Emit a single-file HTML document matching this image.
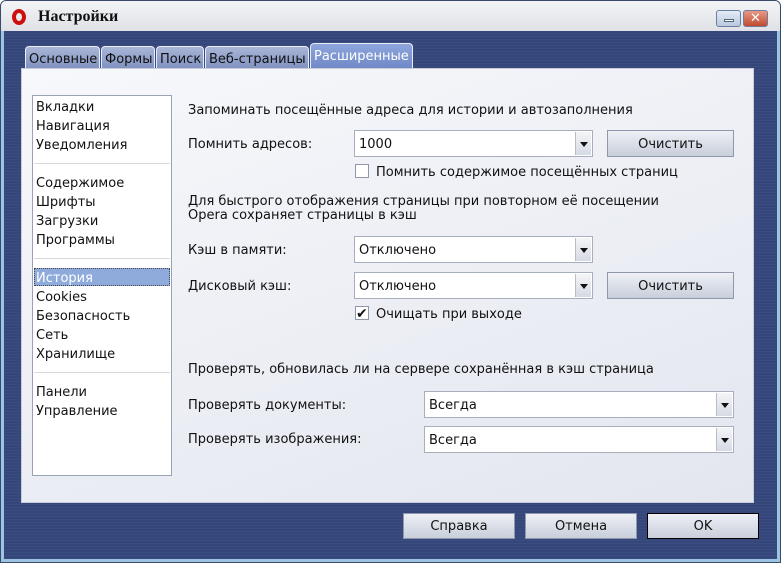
<!DOCTYPE html>
<html><head><meta charset="utf-8"><style>
*{margin:0;padding:0;box-sizing:border-box}
body{width:781px;height:563px;overflow:hidden;background:#fff;font-family:"DejaVu Sans","Liberation Sans",sans-serif;font-size:13px;color:#111;position:relative}
.abs{position:absolute}
#win{left:0;top:0;width:781px;height:563px;border:1px solid #3a4a6a;border-radius:6px 6px 0 0;background:#9cc3e0}
#title{left:1px;top:1px;width:779px;height:30px;background:linear-gradient(#f4f5f7,#dfe1e6);border-radius:5px 5px 0 0}
#body{left:4px;top:31px;width:773px;height:528px;background:repeating-linear-gradient(#34467a 0,#34467a 2px,#3a4c80 2px,#3a4c80 3px)}
.tab{top:46px;height:23px;background:linear-gradient(#a9b6d8,#7f90c0);border:1px solid #e8ecf6;border-bottom:none;border-radius:4px 4px 0 0;padding:5px 3px 0;font-size:13px;color:#111;white-space:nowrap}
#panel{left:21px;top:68px;width:733px;height:435px;background:linear-gradient(160deg,#f7f8fb,#e3e6ef);border:1px solid #c8cdd8}
#list{left:32px;top:95px;width:140px;height:381px;background:#fff;border:1px solid #9aa3b5}
.li{left:36px;font-size:13px}
.sep{left:34px;width:136px;height:1px;background:#d8d8d8}
.t{left:188px;font-size:13px;white-space:nowrap}
.combo{background:#fff;border:1px solid #a7aebc;height:27px}
.combo span{position:absolute;left:4px;top:6px}
.combo i{position:absolute;right:1px;top:1px;width:16px;height:23px;background:linear-gradient(#f4f5f8,#d6dae4);border-left:1px solid #b8bdc8}
.combo i:after{content:"";position:absolute;left:4px;top:10px;border:4px solid transparent;border-top:5px solid #111;border-bottom:0}
.btn{background:linear-gradient(#eef0f5,#c8cedb);border:1px solid #8f98ab;text-align:center;line-height:27px;font-size:13px}
.cb{width:14px;height:14px;background:#fff;border:1px solid #8f98ab}
.wb{top:10px;width:25px;height:17px;border:1px solid #6b7f9c;border-radius:3px}
</style></head><body>
<div id="win" class="abs"></div>
<div id="title" class="abs"></div>
<div class="abs" style="left:12px;top:9px;width:14px;height:16px;border:4.5px solid #cc1010;border-radius:50%"></div>
<div class="abs" style="left:38px;top:8px;font-family:'Liberation Serif',serif;font-weight:bold;font-size:16px">Настройки</div>
<div class="abs wb" style="left:716px;background:linear-gradient(#e4ecf6,#b8c8de)"><div class="abs" style="left:7px;top:8px;width:10px;height:3px;background:#fff;border:1px solid #567"></div></div>
<div class="abs wb" style="left:743px;background:linear-gradient(#e89a88,#c04a30);color:#fff;font-weight:bold;text-align:center;line-height:15px;font-size:13px">✕</div>
<div id="body" class="abs"></div>
<div class="abs tab" style="left:25px;width:75px">Основные</div>
<div class="abs tab" style="left:101px;width:54px">Формы</div>
<div class="abs tab" style="left:156px;width:48px">Поиск</div>
<div class="abs tab" style="left:205px;width:104px">Веб-страницы</div>
<div class="abs tab" style="left:310px;top:43px;height:26px;width:103px;background:linear-gradient(#8ea6dc,#6f88c6);color:#fff;padding-top:5px">Расширенные</div>
<div id="panel" class="abs"></div>
<div id="list" class="abs"></div>
<div class="abs li" style="top:100px">Вкладки</div>
<div class="abs li" style="top:119px">Навигация</div>
<div class="abs li" style="top:138px">Уведомления</div>
<div class="abs sep" style="top:163px"></div>
<div class="abs li" style="top:176px">Содержимое</div>
<div class="abs li" style="top:195px">Шрифты</div>
<div class="abs li" style="top:214px">Загрузки</div>
<div class="abs li" style="top:233px">Программы</div>
<div class="abs sep" style="top:258px"></div>
<div class="abs" style="left:34px;top:268px;width:136px;height:18px;background:#8eabdb;border:1px dotted #445"></div>
<div class="abs li" style="top:271px;color:#fff">История</div>
<div class="abs li" style="top:290px">Cookies</div>
<div class="abs li" style="top:309px">Безопасность</div>
<div class="abs li" style="top:328px">Сеть</div>
<div class="abs li" style="top:347px">Хранилище</div>
<div class="abs sep" style="top:372px"></div>
<div class="abs li" style="top:385px">Панели</div>
<div class="abs li" style="top:404px">Управление</div>

<div class="abs t" style="top:103px">Запоминать посещённые адреса для истории и автозаполнения</div>
<div class="abs t" style="top:137px">Помнить адресов:</div>
<div class="abs combo" style="left:354px;top:130px;width:239px"><span>1000</span><i></i></div>
<div class="abs btn" style="left:607px;top:130px;width:127px;height:27px">Очистить</div>
<div class="abs cb" style="left:355px;top:164px"></div>
<div class="abs t" style="left:376px;top:165px">Помнить содержимое посещённых страниц</div>
<div class="abs t" style="top:194px">Для быстрого отображения страницы при повторном её посещении</div>
<div class="abs t" style="top:208px">Opera сохраняет страницы в кэш</div>
<div class="abs t" style="top:243px">Кэш в памяти:</div>
<div class="abs combo" style="left:354px;top:236px;width:239px"><span>Отключено</span><i></i></div>
<div class="abs t" style="top:279px">Дисковый кэш:</div>
<div class="abs combo" style="left:354px;top:272px;width:239px"><span>Отключено</span><i></i></div>
<div class="abs btn" style="left:607px;top:272px;width:127px;height:27px">Очистить</div>
<div class="abs cb" style="left:355px;top:306px;font-size:14px;line-height:14px;font-weight:bold">✔</div>
<div class="abs t" style="left:376px;top:307px">Очищать при выходе</div>
<div class="abs t" style="top:362px">Проверять, обновилась ли на сервере сохранённая в кэш страница</div>
<div class="abs t" style="top:398px">Проверять документы:</div>
<div class="abs combo" style="left:424px;top:391px;width:310px"><span>Всегда</span><i></i></div>
<div class="abs t" style="top:432px">Проверять изображения:</div>
<div class="abs combo" style="left:424px;top:426px;width:310px"><span>Всегда</span><i></i></div>

<div class="abs btn" style="left:403px;top:513px;width:112px;height:26px;line-height:26px">Справка</div>
<div class="abs btn" style="left:525px;top:513px;width:112px;height:26px;line-height:26px">Отмена</div>
<div class="abs btn" style="left:647px;top:513px;width:112px;height:26px;line-height:26px;border:1px solid #000">OK</div>
</body></html>
